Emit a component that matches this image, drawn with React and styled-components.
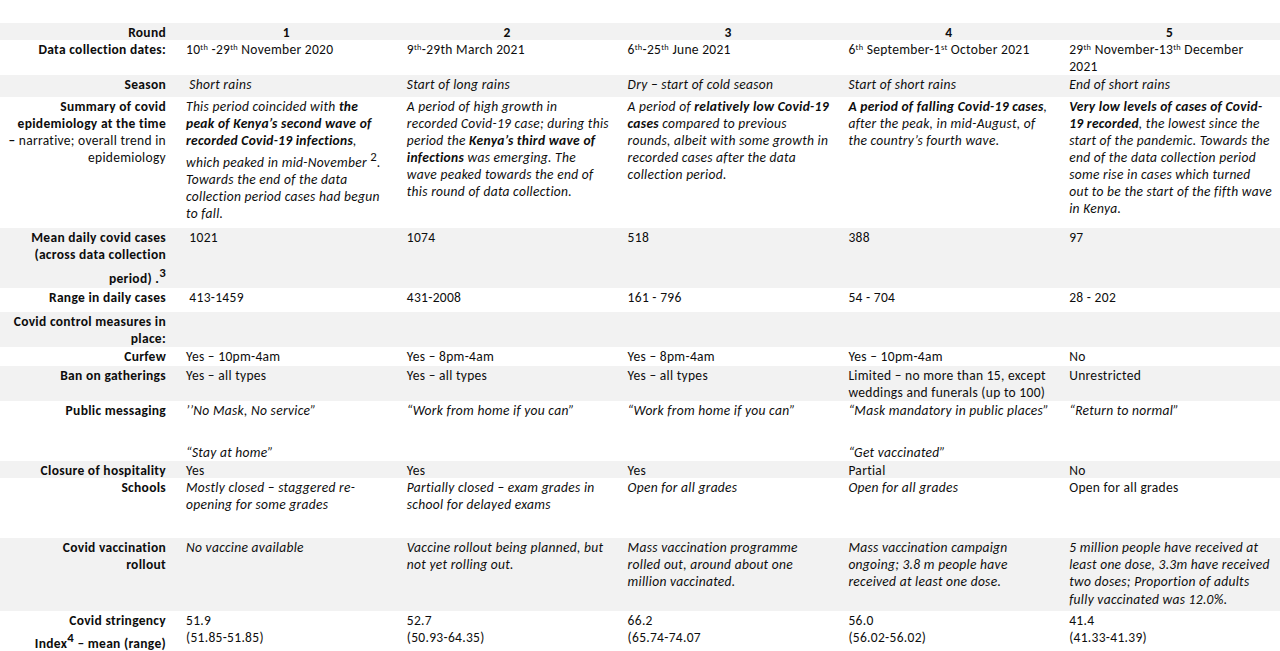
import React from "react";
import styled, { createGlobalStyle } from "styled-components";

const GlobalStyle = createGlobalStyle`
  html, body { margin: 0; padding: 0; background: #ffffff; }
  body {
    font-family: Carlito, Lato, "Liberation Sans", sans-serif;
    font-size: 13.5px;
    letter-spacing: 0.3px;
    line-height: 17px;
    color: #0d0d0d;
  }
`;

const Page = styled.div`
  padding-top: 23px;
  width: 1280px;
`;

const Row = styled.div`
  display: grid;
  grid-template-columns: 176px repeat(5, 1fr);
  height: ${(p) => p.$h}px;
  padding-top: 1px;
  box-sizing: border-box;
  background: ${(p) => (p.$shade ? "#f2f2f2" : "#ffffff")};
  overflow: hidden;
`;

const Label = styled.div`
  text-align: right;
  font-weight: 700;
  padding-right: 10px;
  white-space: nowrap;
`;

const Cell = styled.div`
  padding-left: ${(p) => (p.$center ? 0 : 10)}px;
  text-align: ${(p) => (p.$center ? "center" : "left")};
  font-style: ${(p) => (p.$italic ? "italic" : "normal")};
  font-weight: ${(p) => (p.$bold ? 700 : 400)};
  white-space: nowrap;
`;

const Line = styled.div`
  padding-top: ${(p) => p.$pt || 0}px;
  padding-bottom: ${(p) => p.$pb || 0}px;
`;

const Reg = styled.span`
  font-weight: 400;
`;

const Sup = styled.sup`
  font-size: 0.62em;
  vertical-align: 0.5em;
  line-height: 0;
`;

const Ref = styled.span`
  font-size: 0.95em;
  vertical-align: 0.45em;
  line-height: 0;
  font-style: normal;
`;

const rows = [
  {
    h: 17,
    shade: true,
    label: ["Round"],
    center: true,
    bold: true,
    cells: [["1"], ["2"], ["3"], ["4"], ["5"]],
  },
  {
    h: 35,
    label: ["Data collection dates:"],
    cells: [
      [<>10<Sup>th</Sup> -29<Sup>th</Sup> November 2020</>],
      [<>9<Sup>th</Sup>-29th March 2021</>],
      [<>6<Sup>th</Sup>-25<Sup>th</Sup> June 2021</>],
      [<>6<Sup>th</Sup> September-1<Sup>st</Sup> October 2021</>],
      [<>29<Sup>th</Sup> November-13<Sup>th</Sup> December</>, "2021"],
    ],
  },
  {
    h: 22,
    shade: true,
    label: ["Season"],
    italic: true,
    cells: [
      ["\u00a0Short rains"],
      ["Start of long rains"],
      ["Dry \u2013 start of cold season"],
      ["Start of short rains"],
      ["End of short rains"],
    ],
  },
  {
    h: 131,
    label: [
      "Summary of covid",
      "epidemiology at the time",
      <>
        {"\u2013"}
        <Reg> narrative; overall trend in</Reg>
      </>,
      <Reg>epidemiology</Reg>,
    ],
    italic: true,
    cells: [
      [
        <>This period coincided with <b>the</b></>,
        <b>peak of Kenya’s second wave of</b>,
        <><b>recorded Covid-19 infections</b>,</>,
        { pt: 5, c: <>which peaked in mid-November <Ref>2</Ref>.</> },
        "Towards the end of the data",
        "collection period cases had begun",
        "to fall.",
      ],
      [
        "A period of high growth in",
        "recorded Covid-19 case; during this",
        <>period the <b>Kenya’s third wave of</b></>,
        <><b>infections</b> was emerging. The</>,
        "wave peaked towards the end of",
        "this round of data collection.",
      ],
      [
        <>A period of <b>relatively low Covid-19</b></>,
        <><b>cases</b> compared to previous</>,
        "rounds, albeit with some growth in",
        "recorded cases after the data",
        "collection period.",
      ],
      [
        <><b>A period of falling Covid-19 cases</b>,</>,
        "after the peak, in mid-August, of",
        "the country’s fourth wave.",
      ],
      [
        <b>Very low levels of cases of Covid-</b>,
        <><b>19 recorded</b>, the lowest since the</>,
        "start of the pandemic. Towards the",
        "end of the data collection period",
        "some rise in cases which turned",
        "out to be the start of the fifth wave",
        "in Kenya.",
      ],
    ],
  },
  {
    h: 60,
    shade: true,
    label: [
      "Mean daily covid cases",
      "(across data collection",
      { pt: 7, c: <>period) .<Ref>3</Ref></> },
    ],
    cells: [["\u00a01021"], ["1074"], ["518"], ["388"], ["97"]],
  },
  {
    h: 24,
    label: ["Range in daily cases"],
    cells: [["\u00a0413-1459"], ["431-2008"], ["161 - 796"], ["54 - 704"], ["28 - 202"]],
  },
  {
    h: 35,
    shade: true,
    label: ["Covid control measures in", "place:"],
    cells: [[], [], [], [], []],
  },
  {
    h: 19,
    label: ["Curfew"],
    cells: [
      ["Yes \u2013 10pm-4am"],
      ["Yes \u2013 8pm-4am"],
      ["Yes \u2013 8pm-4am"],
      ["Yes \u2013 10pm-4am"],
      ["No"],
    ],
  },
  {
    h: 35,
    shade: true,
    label: ["Ban on gatherings"],
    cells: [
      ["Yes \u2013 all types"],
      ["Yes \u2013 all types"],
      ["Yes \u2013 all types"],
      ["Limited \u2013 no more than 15, except", "weddings and funerals (up to 100)"],
      ["Unrestricted"],
    ],
  },
  {
    h: 60,
    label: ["Public messaging"],
    italic: true,
    cells: [
      ["’’No Mask, No service”", { pt: 25, c: "“Stay at home”" }],
      ["“Work from home if you can”"],
      ["“Work from home if you can”"],
      ["“Mask mandatory in public places”", { pt: 25, c: "“Get vaccinated”" }],
      ["“Return to normal”"],
    ],
  },
  {
    h: 17,
    shade: true,
    label: ["Closure of hospitality"],
    cells: [["Yes"], ["Yes"], ["Yes"], ["Partial"], ["No"]],
  },
  {
    h: 60,
    label: ["Schools"],
    italic: true,
    cells: [
      ["Mostly closed \u2013 staggered re-", "opening for some grades"],
      ["Partially closed \u2013 exam grades in", "school for delayed exams"],
      ["Open for all grades"],
      ["Open for all grades"],
      { upright: true, lines: ["Open for all grades"] },
    ],
  },
  {
    h: 73,
    shade: true,
    label: ["Covid vaccination", "rollout"],
    italic: true,
    cells: [
      ["No vaccine available"],
      ["Vaccine rollout being planned, but", "not yet rolling out."],
      ["Mass vaccination programme", "rolled out, around about one", "million vaccinated."],
      ["Mass vaccination campaign", "ongoing; 3.8 m people have", "received at least one dose."],
      [
        "5 million people have received at",
        "least one dose, 3.3m have received",
        "two doses; Proportion of adults",
        { pt: 1, c: "fully vaccinated was 12.0%." },
      ],
    ],
  },
  {
    h: 45,
    label: ["Covid stringency", { pt: 6, c: <>Index<Ref>4</Ref> – mean (range)</> }],
    cells: [
      ["51.9", "(51.85-51.85)"],
      ["52.7", "(50.93-64.35)"],
      ["66.2", "(65.74-74.07"],
      ["56.0", "(56.02-56.02)"],
      ["41.4", "(41.33-41.39)"],
    ],
  },
];

function renderLines(lines) {
  return lines.map((l, i) => {
    if (l && typeof l === "object" && "c" in l) {
      return (
        <Line key={i} $pt={l.pt} $pb={l.pb}>
          {l.c}
        </Line>
      );
    }
    return <Line key={i}>{l}</Line>;
  });
}

export default function App() {
  return (
    <>
      <GlobalStyle />
      <Page>
        {rows.map((r, i) => (
          <Row key={i} $h={r.h} $shade={r.shade}>
            <Label>{renderLines(r.label)}</Label>
            {r.cells.map((c, j) => {
              const upright = !Array.isArray(c) && c.upright;
              const lines = Array.isArray(c) ? c : c.lines;
              return (
                <Cell
                  key={j}
                  $center={r.center}
                  $bold={r.bold}
                  $italic={r.italic && !upright}
                >
                  {renderLines(lines)}
                </Cell>
              );
            })}
          </Row>
        ))}
      </Page>
    </>
  );
}
